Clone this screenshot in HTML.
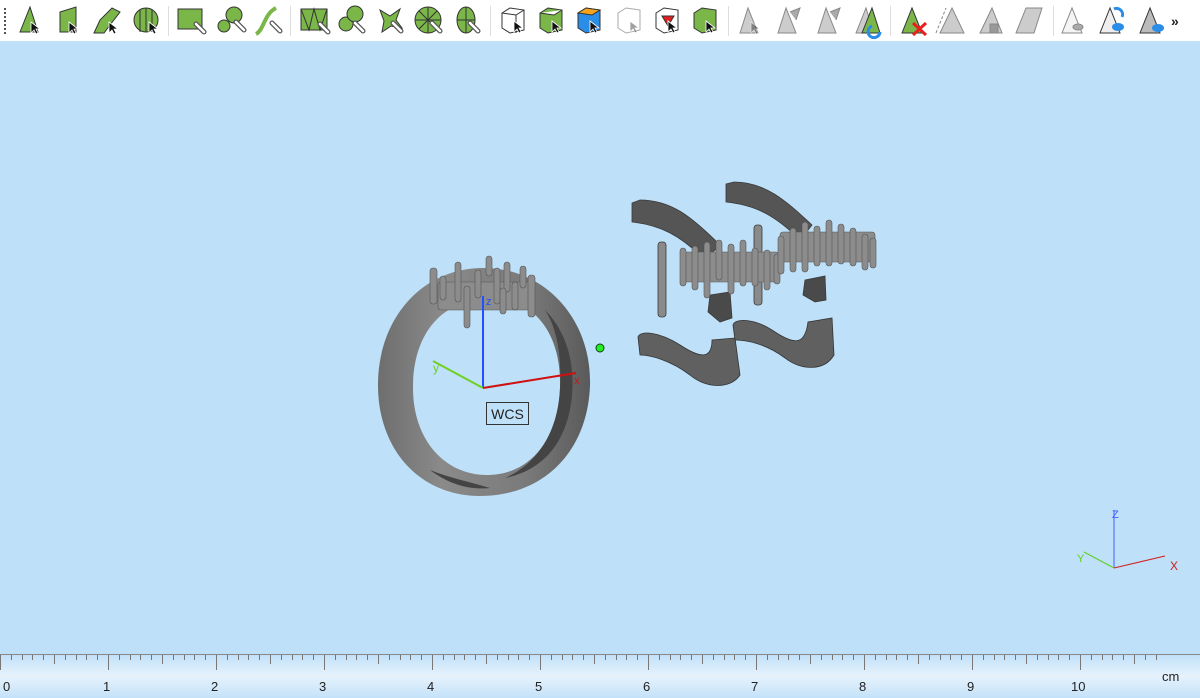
<!DOCTYPE html>
<html><head><meta charset="utf-8"><style>
html,body{margin:0;padding:0;width:1200px;height:698px;overflow:hidden;background:#bee0f8;font-family:"Liberation Sans",sans-serif}
#tb{position:absolute;left:0;top:0;width:1200px;height:41px;background:#fff}
svg{position:absolute;left:0;top:0}
</style></head><body>
<div id="tb"></div>
<svg width="1200" height="698" viewBox="0 0 1200 698">
<defs>
<linearGradient id="rg" x1="0" y1="0" x2="0" y2="1"><stop offset="0" stop-color="#bfe0f9"/><stop offset="0.5" stop-color="#e6f2fc"/><stop offset="1" stop-color="#c4e2f9"/></linearGradient>
<linearGradient id="band" x1="0" y1="0" x2="1" y2="0"><stop offset="0" stop-color="#6e6e6e"/><stop offset="0.3" stop-color="#8a8a8a"/><stop offset="0.7" stop-color="#7a7a7a"/><stop offset="1" stop-color="#5a5a5a"/></linearGradient>
<g id="ar"><path d="M0 0 L0 11 L3 8 L5 12 L7 11 L5 7 L9 7 Z" fill="#111" stroke="#fff" stroke-width="0.8"/></g>
<g id="pen"><path d="M0 0 l8 8" stroke="#555" stroke-width="5" stroke-linecap="round"/><path d="M0 0 l8 8" stroke="#fff" stroke-width="2.6" stroke-linecap="round"/></g>
</defs>
<!-- toolbar -->
<g>
<line x1="5" y1="8" x2="5" y2="34" stroke="#555" stroke-width="2" stroke-dasharray="2 2"/>
<g stroke="#ddd" stroke-width="1"><line x1="168.5" y1="6" x2="168.5" y2="36"/><line x1="290.5" y1="6" x2="290.5" y2="36"/><line x1="490.5" y1="6" x2="490.5" y2="36"/><line x1="728.5" y1="6" x2="728.5" y2="36"/><line x1="890.5" y1="6" x2="890.5" y2="36"/><line x1="1053.5" y1="6" x2="1053.5" y2="36"/></g>
<g fill="#7ab648" stroke="#333" stroke-width="1">
<path d="M20 32 L30 7 L38 32 Z"/><use href="#ar" x="31" y="22"/>
<path d="M60 12 L76 7 L76 32 L60 32 Z"/><use href="#ar" x="69" y="22"/>
<path d="M94 33 L100 20 L112 8 L120 12 L110 25 L104 33 Z"/><use href="#ar" x="109" y="22"/>
<circle cx="146" cy="20" r="12"/><path d="M140 10 V32 M146 8 V32 M152 10 V32" fill="none"/><use href="#ar" x="149" y="22"/>
<rect x="178" y="9" width="24" height="20"/><use href="#pen" x="196" y="24"/>
<circle cx="224" cy="26" r="6"/><circle cx="234" cy="15" r="8"/><use href="#pen" x="236" y="22"/>
<path d="M256 34 C264 30 264 14 276 8" fill="none" stroke="#7ab648" stroke-width="4"/><use href="#pen" x="272" y="23"/>
<rect x="301" y="9" width="26" height="21"/><path d="M301 9 L309 30 L314 9 L320 30 L327 9" fill="none"/><use href="#pen" x="320" y="24"/>
<circle cx="346" cy="24" r="7"/><circle cx="355" cy="14" r="8"/><use href="#pen" x="355" y="23"/>
<path d="M380 10 L390 16 L400 9 L396 20 L402 28 L391 26 L382 32 L384 21 Z"/><use href="#pen" x="393" y="23"/>
<circle cx="428" cy="20" r="13"/><path d="M415 20 H441 M428 7 V33 M419 11 L437 29 M437 11 L419 29" fill="none"/><use href="#pen" x="432" y="23"/>
<ellipse cx="466" cy="20" rx="9" ry="13"/><path d="M457 20 H475 M466 7 V33" fill="none"/><use href="#pen" x="470" y="23"/>
</g>
<g stroke="#333" stroke-width="1">
<path d="M502 13 L510 8 L524 10 L524 30 L510 33 L502 28 Z" fill="#fff"/><path d="M502 13 L516 15 L524 10 M516 15 V33" fill="none"/><use href="#ar" x="514" y="21"/>
<path d="M540 13 L548 8 L562 10 L562 30 L548 33 L540 28 Z" fill="#7ab648"/><path d="M540 13 L554 15 L562 10" fill="#fff"/><use href="#ar" x="552" y="21"/>
<path d="M578 13 L586 8 L600 10 L600 30 L586 33 L578 28 Z" fill="#2a8ee8"/><path d="M578 13 L586 8 L600 10 L592 15 Z" fill="#f7a21b"/><use href="#ar" x="590" y="21"/>
<path d="M618 13 L626 8 L640 10 L640 30 L626 33 L618 28 Z" fill="#fff" stroke="#aaa"/><use href="#ar" x="630" y="21" opacity="0.4"/>
<path d="M656 13 L664 8 L678 10 L678 30 L664 33 L656 28 Z" fill="#fff"/><path d="M662 16 L674 16 L668 26 Z" fill="#e02020"/><use href="#ar" x="668" y="21"/>
<path d="M694 13 L702 8 L716 10 L716 30 L702 33 L694 28 Z" fill="#7ab648"/><use href="#ar" x="706" y="21"/>
</g>
<g fill="#ccc" stroke="#888" stroke-width="1">
<path d="M740 33 L748 8 L758 33 Z"/><use href="#ar" x="751" y="22" opacity="0.4"/>
<path d="M778 33 L786 8 L796 33 Z"/><path d="M790 12 L800 8 L796 20" fill="#aaa"/>
<path d="M818 33 L826 8 L836 33 Z"/><path d="M830 12 L840 8 L836 20" fill="#aaa"/>
<path d="M856 33 L866 8 L874 33 Z"/><path d="M862 33 L872 8 L880 33 Z" fill="#7ab648" stroke="#333"/><path d="M872 26 a6 6 0 1 0 8 6" stroke="#2a8ee8" stroke-width="3" fill="none"/>
<path d="M902 33 L912 8 L922 33 Z" fill="#7ab648" stroke="#333"/><path d="M913 23 L926 35 M926 23 L913 35" stroke="#e82020" stroke-width="3"/>
<path d="M940 33 L952 8 L964 33 Z"/><path d="M936 33 L946 8" stroke-dasharray="3 2" fill="none"/>
<path d="M980 33 L992 8 L1002 33 Z"/><rect x="990" y="24" width="8" height="9" fill="#999"/>
<path d="M1016 33 L1026 8 L1042 8 L1034 33 Z"/>
<path d="M1062 33 L1072 8 L1082 33 Z" fill="#f4f4f4"/><ellipse cx="1078" cy="27" rx="5" ry="3" fill="#aaa"/>
<path d="M1100 33 L1110 8 L1120 33 Z" fill="#eee" stroke="#333"/><ellipse cx="1118" cy="27" rx="6" ry="4" fill="#2a8ee8" stroke="none"/><path d="M1114 9 a6 6 0 0 1 8 8" stroke="#2a8ee8" stroke-width="3" fill="none"/>
<path d="M1140 33 L1150 8 L1160 33 Z" fill="#bbb" stroke="#333"/><ellipse cx="1158" cy="28" rx="6" ry="4" fill="#2a8ee8" stroke="none"/>
</g>
<text x="1171" y="26" font-size="14" font-weight="bold" fill="#222">»</text>
</g>

<!-- ring -->
<g>
<path fill-rule="evenodd" fill="url(#band)" d="M378 385 C378 320 420 270 480 268 C545 266 592 320 590 385 C588 450 545 496 480 496 C420 496 378 450 378 385 Z M413 388 C413 335 440 300 490 298 C535 298 562 335 560 388 C558 440 530 475 487 475 C445 475 413 440 413 388 Z"/>
<path d="M545 310 C565 330 575 360 572 395 C568 440 545 470 505 478 C535 465 558 435 560 388 C562 350 555 325 545 310 Z" fill="#444"/>
<path d="M430 470 C450 485 470 490 490 488 C470 482 450 478 430 470 Z" fill="#444"/>
<g fill="#8c8c8c" stroke="#555" stroke-width="0.6">
<rect x="438" y="282" width="96" height="28" rx="3"/>
<rect x="430" y="268" width="7" height="36" rx="3"/><rect x="528" y="275" width="7" height="42" rx="3"/>
<rect x="440" y="276" width="6" height="24" rx="3"/><rect x="455" y="262" width="6" height="40" rx="3"/><rect x="464" y="286" width="6" height="42" rx="3"/><rect x="475" y="270" width="6" height="28" rx="3"/><rect x="486" y="256" width="6" height="20" rx="3"/><rect x="494" y="268" width="6" height="36" rx="3"/><rect x="504" y="262" width="6" height="30" rx="3"/><rect x="512" y="282" width="6" height="28" rx="3"/><rect x="520" y="266" width="6" height="22" rx="3"/><rect x="500" y="288" width="6" height="26" rx="3"/>
</g>
</g>
<!-- axes -->
<line x1="483" y1="388" x2="483" y2="296" stroke="#2050ff" stroke-width="2"/>
<text x="486" y="305" font-size="11" fill="#2050ff">z</text>
<line x1="483" y1="388" x2="433" y2="361" stroke="#6fd020" stroke-width="2"/>
<text x="433" y="372" font-size="12" fill="#6fd020">y</text>
<line x1="483" y1="388" x2="576" y2="373" stroke="#d01010" stroke-width="2"/>
<text x="574" y="384" font-size="11" fill="#d01010">x</text>
<rect x="486.5" y="402.5" width="42" height="22" fill="none" stroke="#333"/>
<text x="507.5" y="419" font-size="14" fill="#222" text-anchor="middle">WCS</text>
<circle cx="600" cy="348" r="4" fill="#22ee22" stroke="#114411"/>

<!-- right parts -->
<g fill="#6a6a6a" stroke="#3a3a3a" stroke-width="0.8">
<path d="M632 203 L640 200 C670 200 690 215 720 245 L705 260 C680 235 660 225 632 222 Z" fill="#555"/>
<rect x="658" y="242" width="8" height="75" rx="3" fill="#8a8a8a"/>
<path d="M726 184 L734 182 C765 182 785 200 812 225 L800 240 C775 215 755 205 726 202 Z" fill="#555"/>
<rect x="754" y="225" width="8" height="80" rx="3" fill="#8a8a8a"/>
<path d="M710 295 L730 292 L732 318 L720 322 L708 312 Z" fill="#4a4a4a"/>
<path d="M805 280 L825 276 L826 300 L815 302 L803 295 Z" fill="#4a4a4a"/>
</g>
<g fill="#8c8c8c" stroke="#555" stroke-width="0.6">
<rect x="684" y="252" width="95" height="30" rx="3"/>
<rect x="680" y="248" width="6" height="38" rx="3"/><rect x="692" y="246" width="6" height="44" rx="3"/><rect x="704" y="242" width="6" height="56" rx="3"/><rect x="716" y="240" width="6" height="40" rx="3"/><rect x="728" y="244" width="6" height="50" rx="3"/><rect x="740" y="240" width="6" height="46" rx="3"/><rect x="752" y="248" width="6" height="38" rx="3"/><rect x="764" y="250" width="6" height="40" rx="3"/><rect x="774" y="254" width="6" height="30" rx="3"/>
<rect x="780" y="232" width="95" height="30" rx="3"/>
<rect x="778" y="236" width="6" height="38" rx="3"/><rect x="790" y="228" width="6" height="44" rx="3"/><rect x="802" y="222" width="6" height="50" rx="3"/><rect x="814" y="226" width="6" height="40" rx="3"/><rect x="826" y="220" width="6" height="46" rx="3"/><rect x="838" y="224" width="6" height="40" rx="3"/><rect x="850" y="228" width="6" height="38" rx="3"/><rect x="862" y="234" width="6" height="36" rx="3"/><rect x="870" y="238" width="6" height="30" rx="3"/>
</g>
<g fill="#606060" stroke="#333" stroke-width="0.8">
<path d="M638 337 C640 330 660 332 680 345 C700 358 712 360 712 340 L735 338 L740 375 C730 390 705 388 690 375 C670 360 650 355 640 355 Z"/>
<path d="M733 325 C735 318 755 318 775 332 C795 345 805 345 808 322 L832 318 L834 355 C824 372 800 370 785 358 C765 343 745 340 735 340 Z"/>
</g>

<!-- small axes -->
<line x1="1114" y1="568" x2="1114" y2="510" stroke="#4060ff" stroke-width="1"/>
<text x="1112" y="518" font-size="11" fill="#4060ff">Z</text>
<line x1="1114" y1="568" x2="1165" y2="556" stroke="#d02020" stroke-width="1"/>
<text x="1170" y="570" font-size="12" fill="#d02020">X</text>
<line x1="1114" y1="568" x2="1084" y2="552" stroke="#60d020" stroke-width="1"/>
<text x="1077" y="562" font-size="11" fill="#60d020">Y</text>

<!-- ruler -->
<rect x="0" y="654" width="1200" height="44" fill="url(#rg)"/>
<line x1="0" y1="654.5" x2="1200" y2="654.5" stroke="#888" stroke-width="1"/>
<g stroke="#777" stroke-width="1" id="ticks"></g>
<g font-size="13" fill="#222">
<text x="3" y="691">0</text><text x="103" y="691">1</text><text x="211" y="691">2</text><text x="319" y="691">3</text><text x="427" y="691">4</text><text x="535" y="691">5</text><text x="643" y="691">6</text><text x="751" y="691">7</text><text x="859" y="691">8</text><text x="967" y="691">9</text><text x="1071" y="691">10</text><text x="1162" y="681">cm</text>
</g>
</svg>
<script>
var g=document.getElementById('ticks'),s='';
for(var i=0;i<=110;i++){var x=Math.round(i*10.8)+0.5;if(x>1160)break;var h=(i%10==0)?15:(i%5==0)?9:5;s+='<line x1="'+x+'" y1="655" x2="'+x+'" y2="'+(655+h)+'"/>';}
g.innerHTML=s;
</script>
</body></html>
